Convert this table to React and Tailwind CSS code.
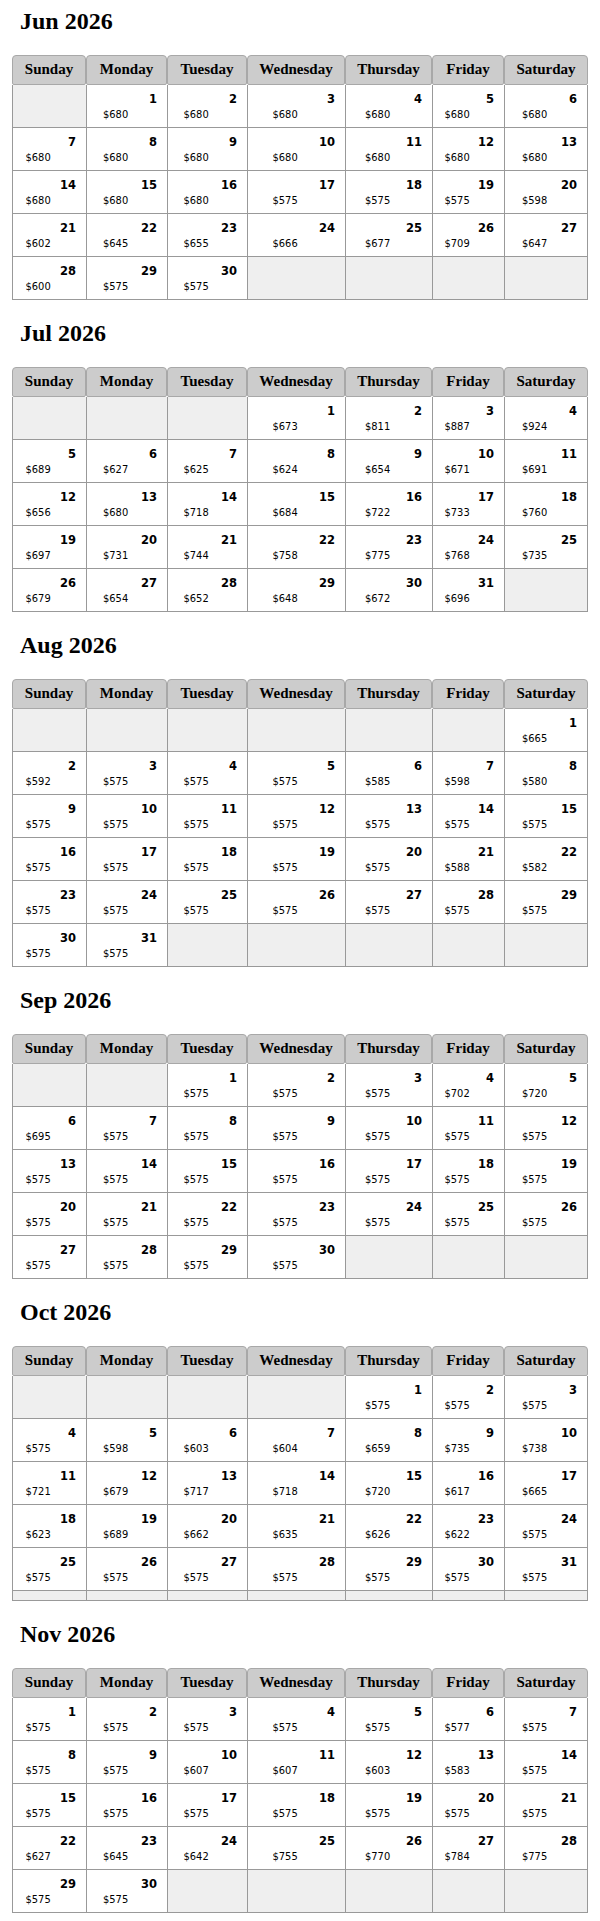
import React from 'react';

const DAYS = ['Sunday', 'Monday', 'Tuesday', 'Wednesday', 'Thursday', 'Friday', 'Saturday'];

// start = weekday index of the 1st, prices listed day by day
const months = [
  {
    title: 'Jun 2026',
    start: 1,
    prices: [
      680, 680, 680, 680, 680, 680,
      680, 680, 680, 680, 680, 680, 680,
      680, 680, 680, 575, 575, 575, 598,
      602, 645, 655, 666, 677, 709, 647,
      600, 575, 575,
    ],
  },
  {
    title: 'Jul 2026',
    start: 3,
    prices: [
      673, 811, 887, 924,
      689, 627, 625, 624, 654, 671, 691,
      656, 680, 718, 684, 722, 733, 760,
      697, 731, 744, 758, 775, 768, 735,
      679, 654, 652, 648, 672, 696,
    ],
  },
  {
    title: 'Aug 2026',
    start: 6,
    prices: [
      665,
      592, 575, 575, 575, 585, 598, 580,
      575, 575, 575, 575, 575, 575, 575,
      575, 575, 575, 575, 575, 588, 582,
      575, 575, 575, 575, 575, 575, 575,
      575, 575,
    ],
  },
  {
    title: 'Sep 2026',
    start: 2,
    prices: [
      575, 575, 575, 702, 720,
      695, 575, 575, 575, 575, 575, 575,
      575, 575, 575, 575, 575, 575, 575,
      575, 575, 575, 575, 575, 575, 575,
      575, 575, 575, 575,
    ],
  },
  {
    title: 'Oct 2026',
    start: 4,
    extraRow: true,
    prices: [
      575, 575, 575,
      575, 598, 603, 604, 659, 735, 738,
      721, 679, 717, 718, 720, 617, 665,
      623, 689, 662, 635, 626, 622, 575,
      575, 575, 575, 575, 575, 575, 575,
    ],
  },
  {
    title: 'Nov 2026',
    start: 0,
    prices: [
      575, 575, 575, 575, 575, 577, 575,
      575, 575, 607, 607, 603, 583, 575,
      575, 575, 575, 575, 575, 575, 575,
      627, 645, 642, 755, 770, 784, 775,
      575, 575,
    ],
  },
];

const buildRows = (month) => {
  const cells = Array(month.start).fill(null);
  month.prices.forEach((price, i) => cells.push({ day: i + 1, price }));
  while (cells.length % 7 !== 0) cells.push(null);
  // the October table carries one extra, fully empty week
  if (month.extraRow) {
    for (let i = 0; i < 7; i++) cells.push(null);
  }
  const rows = [];
  for (let i = 0; i < cells.length; i += 7) rows.push(cells.slice(i, i + 7));
  return rows;
};

const MonthTable = ({ month }) => {
  const rows = buildRows(month);

  return (
    <div>
      <h2 className="pl-[20px] mb-[20px] text-[24px] leading-[28px] font-bold text-black font-['Liberation_Serif','Times_New_Roman',serif]">
        {month.title}
      </h2>
      <div className="ml-[12px] w-[576px] grid grid-cols-[74px_81px_80px_98px_87px_72px_84px]">
        {/* Header */}
        {DAYS.map((d) => (
          <div
            key={d}
            className="h-[30px] border border-[#a8a8a8] bg-[#cccccc] rounded-t-[4px] rounded-b-[2px] text-center text-[15px] leading-[27px] font-bold text-black font-['Liberation_Serif','Times_New_Roman',serif]"
          >
            {d}
          </div>
        ))}

        {/* Weeks */}
        {rows.map((row, r) => {
          const hasDays = row.some(Boolean);
          return row.map((cell, c) => (
            <div
              key={`${r}-${c}`}
              className={`border-l border-b border-[#999999] ${c === 6 ? 'border-r' : ''} ${
                hasDays ? 'h-[43px]' : 'h-[10px]'
              } ${cell ? 'bg-white' : 'bg-[#efefef]'}`}
            >
              {cell && (
                <>
                  <div className="pt-[6px] pr-[10px] text-right text-[11.5px] leading-[17px] font-bold text-black font-['DejaVu_Sans',Verdana,sans-serif]">
                    {cell.day}
                  </div>
                  <div className="mx-auto w-[48px] text-left text-[11px] leading-[14px] text-black font-['DejaVu_Sans_Condensed','DejaVu_Sans',sans-serif]">
                    ${cell.price}
                  </div>
                </>
              )}
            </div>
          ));
        })}
      </div>
    </div>
  );
};

const App = () => {
  return (
    <div className="w-[600px] bg-white pt-[7px] pb-[8px] flex flex-col gap-[19px]">
      {months.map((m) => (
        <MonthTable key={m.title} month={m} />
      ))}
    </div>
  );
};

export default App;
